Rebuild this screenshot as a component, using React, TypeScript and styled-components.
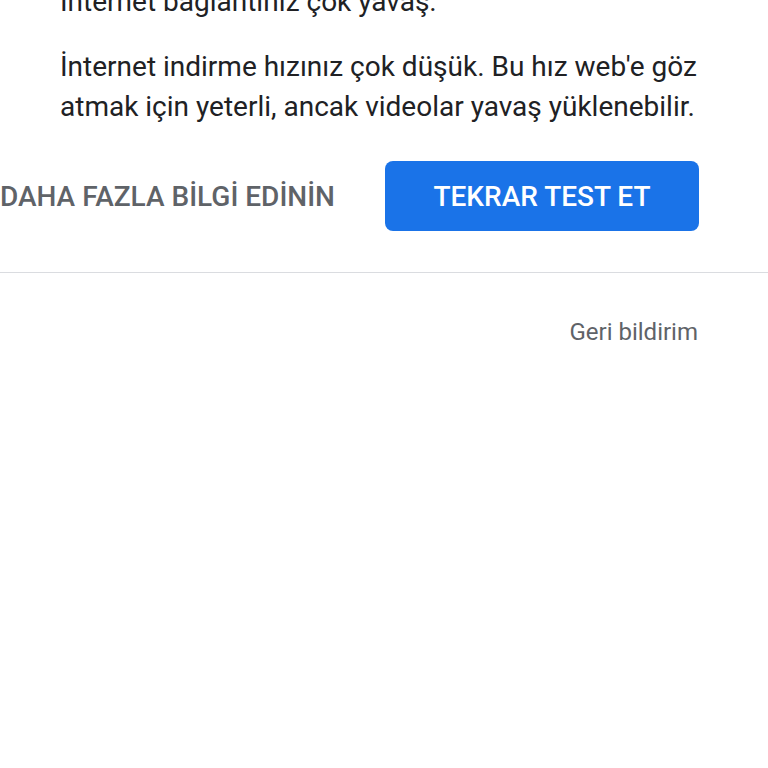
import styled, { createGlobalStyle } from "styled-components";

const GlobalStyle = createGlobalStyle`
  html, body {
    margin: 0;
    padding: 0;
    background: #ffffff;
    overflow: hidden;
  }
  body {
    font-family: Roboto, "Noto Sans", Arial, sans-serif;
  }
`;

const Page = styled.div`
  width: 768px;
  height: 768px;
  overflow: hidden;
  display: flex;
  flex-direction: column;
`;

const Content = styled.div`
  padding: 0 60px 0 60px;
  margin-top: -18px;
`;

const Paragraph = styled.p`
  margin: 0 0 25px;
  color: #202124;
  font-size: 28px;
  line-height: 40px;

  &:last-child {
    margin-bottom: 0;
  }
`;

const Actions = styled.div`
  display: flex;
  justify-content: flex-end;
  align-items: center;
  gap: 50px;
  padding: 34px 69px 41px 0;
  border-bottom: 1px solid #dadce0;
`;

const TextButton = styled.button`
  background: none;
  border: none;
  padding: 0;
  color: #5f6368;
  font-family: Roboto, sans-serif;
  font-size: 28px;
  font-weight: 500;
  white-space: nowrap;
`;

const PrimaryButton = styled.button`
  width: 314px;
  height: 70px;
  border: none;
  border-radius: 8px;
  background: #1a73e8;
  color: #ffffff;
  font-family: Roboto, sans-serif;
  font-size: 28px;
  font-weight: 500;
  flex-shrink: 0;
`;

const Footer = styled.div`
  display: flex;
  justify-content: flex-end;
  padding: 44px 70px 0 0;
`;

const FeedbackLink = styled.span`
  color: #5f6368;
  font-size: 24px;
  line-height: 30px;
`;

export default function App() {
  return (
    <Page>
      <GlobalStyle />
      <Content>
        <Paragraph>İnternet bağlantınız çok yavaş.</Paragraph>
        <Paragraph>
          İnternet indirme hızınız çok düşük. Bu hız web'e göz atmak için
          yeterli, ancak videolar yavaş yüklenebilir.
        </Paragraph>
      </Content>
      <Actions>
        <TextButton>DAHA FAZLA BİLGİ EDİNİN</TextButton>
        <PrimaryButton>TEKRAR TEST ET</PrimaryButton>
      </Actions>
      <Footer>
        <FeedbackLink>Geri bildirim</FeedbackLink>
      </Footer>
    </Page>
  );
}
